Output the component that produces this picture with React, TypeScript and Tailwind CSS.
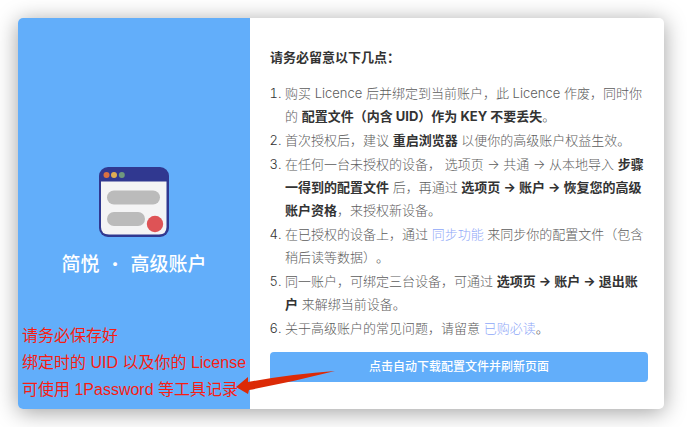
import type { ReactNode } from "react";

function Strong({ children }: { children: ReactNode }) {
  return <strong className="font-bold text-[#333]">{children}</strong>;
}

function DocLink({ href, children }: { href: string; children: ReactNode }) {
  return <a href={href} className="text-[#8fa8f8] hover:underline">{children}</a>;
}

function AppLogo() {
  return (
    <svg viewBox="0 0 70 70" className="size-[70px]" aria-hidden="true">
      <rect width="70" height="70" rx="9" fill="#303890" />
      <path d="M2 14.500H67.500V60Q67.500 67.500 60 67.500H10Q2 67.500 2 60Z" fill="#f4f4f5" />
      <circle cx="7.500" cy="8" r="3" fill="#d97141" />
      <circle cx="15" cy="8" r="3" fill="#dfad52" />
      <circle cx="22.800" cy="8" r="3" fill="#6f987e" />
      <rect x="8" y="23.500" width="53" height="14" rx="7" fill="#bbb" />
      <rect x="8" y="45" width="38" height="14" rx="7" fill="#bbb" />
      <circle cx="56" cy="57" r="8.200" fill="#de5356" />
    </svg>
  );
}

function Sidebar() {
  return (
    <aside className="w-[232px] shrink-0 rounded-l-[5px] bg-[#62aefa] flex flex-col items-center justify-center pt-[18px]">
      <AppLogo />
      <h1 className="mt-[14px] flex gap-3 text-[19px] leading-7 font-medium text-white">
        <span>简悦</span>
        <span className="font-black">·</span>
        <span>高级账户</span>
      </h1>
    </aside>
  );
}

function Notes() {
  return (
    <ol className="list-decimal pl-[15px] mt-[13px] space-y-px leading-[23px] font-light text-[#5c5c5c] marker:text-[#333] [text-spacing-trim:space-all]">
      <li>购买 Licence 后并绑定到当前账户，此 Licence 作废，同时你的 <Strong>配置文件（内含 UID）作为 KEY 不要丢失</Strong>。</li>
      <li>首次授权后，建议 <Strong>重启浏览器</Strong> 以便你的高级账户权益生效。</li>
      <li>在任何一台未授权的设备， 选项页 → 共通 → 从本地导入 <Strong>步骤一得到的配置文件</Strong> 后，再通过 <Strong>选项页 → 账户 → 恢复您的高级账户资格</Strong>，来授权新设备。</li>
      <li>在已授权的设备上，通过 <DocLink href="#sync">同步功能</DocLink> 来同步你的配置文件（包含稍后读等数据）。</li>
      <li>同一账户，可绑定三台设备，可通过 <Strong>选项页 → 账户 → 退出账户</Strong> 来解绑当前设备。</li>
      <li>关于高级账户的常见问题，请留意 <DocLink href="#faq">已购必读</DocLink>。</li>
    </ol>
  );
}

// Hand-made annotation that lies on top of the card
function Annotation() {
  return (
    <div className="absolute left-1 bottom-1.5 pointer-events-none">
      <p className="font-['Liberation_Sans','Noto_Sans_CJK_SC',sans-serif] text-base leading-[27px] text-[#f81d12] whitespace-nowrap">
        请务必保存好<br />
        绑定时的 UID 以及你的 License<br />
        可使用 1Password 等工具记录
      </p>
      <svg viewBox="0 0 100 26" className="absolute left-[214px] bottom-[7px] w-[100px] h-[26px]" aria-hidden="true">
        <path d="M0 17L12 7L12 12Q56 4 99 1Q56 12 13 20L12 24Z" fill="#dc2a06" />
      </svg>
    </div>
  );
}

export default function App() {
  return (
    <main className="p-[18px] pr-[23px] bg-white font-['Inter','Noto_Sans_CJK_SC',sans-serif] text-[13px]" lang="zh-CN">
      <div className="relative flex rounded-[5px] bg-white shadow-[0_3px_22px_rgba(0,0,0,0.38)]">
        <Sidebar />
        <section className="flex-1 min-w-0 pt-7 pb-[27px] pl-5 pr-4">
          <h2 className="font-bold leading-[23px] text-[#333]">请务必留意以下几点：</h2>
          <Notes />
          <button type="button" className="mt-3 w-full h-[30px] rounded bg-[#62aefa] text-xs font-medium text-white">
            点击自动下载配置文件并刷新页面
          </button>
        </section>
        <Annotation />
      </div>
    </main>
  );
}
